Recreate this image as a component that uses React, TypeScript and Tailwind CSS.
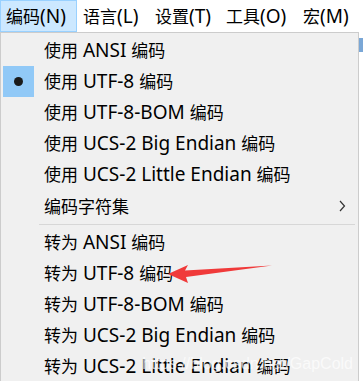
import React from "react";

const font = { fontFamily: '"Noto Sans", "Noto Sans CJK SC", sans-serif' };

function Mixed({ text }: { text: string }) {
  const parts = text.split(/([\u3000-\u9fff]+)/).filter((p) => p.length > 0);
  return (
    <>
      {parts.map((p, i) =>
        /[\u3000-\u9fff]/.test(p) ? (
          <span key={i} className="text-[17px]" style={{ fontFamily: '"Noto Sans CJK SC", sans-serif' }}>
            {p}
          </span>
        ) : (
          <span key={i} className="text-[19px] whitespace-pre" style={{ fontFamily: '"Noto Sans", sans-serif' }}>
            {p}
          </span>
        )
      )}
    </>
  );
}

function Row({ text, checked, sub }: { text: string; checked?: boolean; sub?: boolean }) {
  return (
    <div className="flex items-center h-[31px] relative">
      <div className="w-[43px] h-[31px] flex items-center shrink-0">
        {checked ? (
          <div className="ml-[2px] w-[31px] h-[31px] bg-[#91c9f7] flex items-center justify-center">
            <div className="w-[9px] h-[9px] rounded-full bg-[#1a1a1a]" />
          </div>
        ) : null}
      </div>
      <span className="text-black leading-none whitespace-nowrap">
        <Mixed text={text} />
      </span>
      {sub ? (
        <svg className="absolute right-[12px] top-[10px]" width="8" height="12" viewBox="0 0 8 12">
          <path d="M2 1 L6.5 6 L2 11" fill="none" stroke="#333" strokeWidth="1.2" />
        </svg>
      ) : null}
    </div>
  );
}

function MenuItem({ text, cls }: { text: string; cls: string }) {
  return (
    <div className={"flex items-center whitespace-nowrap leading-none " + cls}>
      <span>
        <Mixed text={text} />
      </span>
    </div>
  );
}

export default function App() {
  return (
    <div className="w-[363px] h-[381px] bg-white overflow-hidden relative" style={font}>
      <div className="flex h-[32px] items-stretch text-black">
        <MenuItem text="编码(N)" cls="px-[5px] bg-[#cce8ff] border border-[#99d1ff] w-[77px]" />
        <MenuItem text="语言(L)" cls="pl-[6px] w-[72px]" />
        <MenuItem text="设置(T)" cls="pl-[6px] w-[71px]" />
        <MenuItem text="工具(O)" cls="pl-[6px] w-[77px]" />
        <MenuItem text="宏(M)" cls="pl-[6px]" />
      </div>
      <div className="flex">
        <div className="w-[359px] bg-[#f0f0f0] border border-[#cccccc] border-b-0 pt-[2px]">
          <Row text="使用 ANSI 编码" />
          <Row text="使用 UTF-8 编码" checked />
          <Row text="使用 UTF-8-BOM 编码" />
          <Row text="使用 UCS-2 Big Endian 编码" />
          <Row text="使用 UCS-2 Little Endian 编码" />
          <Row text="编码字符集" sub />
          <div className="h-[6px] flex items-center pl-[38px] pr-[3px]">
            <div className="h-px w-full bg-[#d7d7d7]" />
          </div>
          <Row text="转为 ANSI 编码" />
          <Row text="转为 UTF-8 编码" />
          <Row text="转为 UTF-8-BOM 编码" />
          <Row text="转为 UCS-2 Big Endian 编码" />
          <Row text="转为 UCS-2 Little Endian 编码" />
        </div>
        <div className="flex-1 flex flex-col">
          <div className="h-[6px] bg-white" />
          <div className="h-[14px] bg-[#7aa7d6]" />
          <div className="flex-1 bg-white" />
        </div>
      </div>
      <svg className="absolute left-[160px] top-[258px]" width="115" height="30" viewBox="0 0 115 30">
        <path d="M8 16 L28 7 L25 12.5 L112 7.5 L26 19 L28 25 Z" fill="#f03a3a" />
      </svg>
      <div className="absolute right-[10px] top-[352px] text-[16px] text-white/70 whitespace-nowrap" style={{ fontFamily: '"Liberation Sans", sans-serif' }}>
        https://blog.csdn.net/GapCold
      </div>
    </div>
  );
}
